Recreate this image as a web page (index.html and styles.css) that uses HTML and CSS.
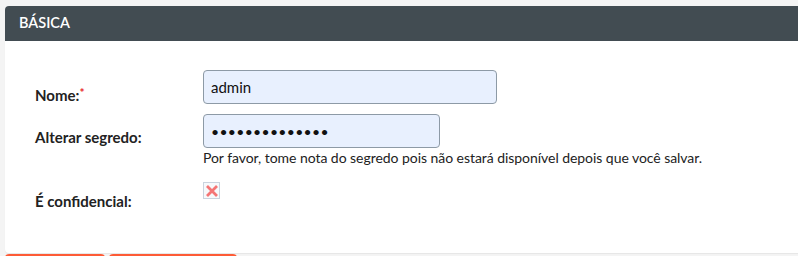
FILE: index.html
```html
<!DOCTYPE html>
<html lang="pt">
<head>
<meta charset="utf-8">
<title>Básica</title>
<link rel="stylesheet" href="styles.css">
</head>
<body>
<div class="panel">
  <div class="panel-header">BÁSICA</div>
  <div class="panel-body">
    <div class="row">
      <label class="label" for="nome">Nome:<span class="req">*</span></label>
      <div class="field">
        <input id="nome" class="input input-wide" type="text" value="admin">
      </div>
    </div>
    <div class="row">
      <label class="label" for="segredo">Alterar segredo:</label>
      <div class="field">
        <input id="segredo" class="input input-narrow pw" type="password" value="abcdefghijklmn">
        <div class="help">Por favor, tome nota do segredo pois não estará disponível depois que você salvar.</div>
      </div>
    </div>
    <div class="row row-check">
      <span class="label">É confidencial:</span>
      <div class="field">
        <span class="checkbox">
          <svg width="14" height="14" viewBox="0 0 14 14"><path d="M2 2 L12 12 M12 2 L2 12" stroke="#f47575" stroke-width="2.8" stroke-linecap="butt"/></svg>
        </span>
      </div>
    </div>
  </div>
</div>
<div class="actions">
  <button class="btn btn-a"></button>
  <button class="btn btn-b"></button>
</div>
</body>
</html>
```

FILE: styles.css
```css
html, body {
  margin: 0;
  padding: 0;
  background: #f4f4f4;
  font-family: Lato, "Open Sans", "Liberation Sans", sans-serif;
  color: #222;
  overflow: hidden;
}

.panel {
  margin: 6px 0 0 5px;
  width: 820px;
  background: #fff;
  border-radius: 4px;
  box-shadow: 0 1px 1px rgba(0,0,0,0.06);
}

.panel-header {
  height: 35px;
  line-height: 34px;
  background: #424c52;
  color: #fff;
  font-size: 14.5px;
  font-weight: 600;
  padding-left: 14px;
  border-radius: 4px 4px 0 0;
}

.panel-body {
  padding: 29px 0 40px 30px;
}

.row {
  display: flex;
  margin-bottom: 9px;
}

.row-check {
  margin-top: 12px;
  margin-bottom: 0;
  min-height: 34px;
}

.label {
  width: 168px;
  flex: none;
  font-weight: 700;
  font-size: 15px;
  line-height: 20px;
  padding-top: 13px;
  color: #222;
}

.row-check .label {
  padding-top: 12px;
}

.req {
  color: #e8242b;
  font-size: 12px;
  vertical-align: 4px;
}

.field {
  display: flex;
  flex-direction: column;
}

.input {
  box-sizing: border-box;
  height: 34px;
  border: 1px solid #8d9aa6;
  border-radius: 4px;
  background: #e8f0fe;
  padding: 0 7px;
  font-family: Lato, "Open Sans", "Liberation Sans", sans-serif;
  font-size: 15px;
  color: #111;
  outline: none;
}

.input-wide { width: 294px; }
.input-narrow { width: 237px; }

.pw {
  font-size: 14px;
  letter-spacing: 0.3px;
}

.help {
  font-size: 14px;
  letter-spacing: -0.05px;
  line-height: 18px;
  margin-top: 1px;
  color: #222;
}

.checkbox {
  box-sizing: border-box;
  width: 17px;
  height: 17px;
  margin-top: 3px;
  border: 1px solid #c9d3de;
  background: #f7f9fb;
  display: flex;
  align-items: center;
  justify-content: center;
}

.actions {
  display: flex;
  gap: 4px;
  margin: 1px 0 0 5px;
}

.btn {
  height: 30px;
  border: none;
  border-radius: 4px 4px 0 0;
  background: #fd5b36;
  padding: 0;
}

.btn-a { width: 100px; }
.btn-b { width: 128px; }
```
